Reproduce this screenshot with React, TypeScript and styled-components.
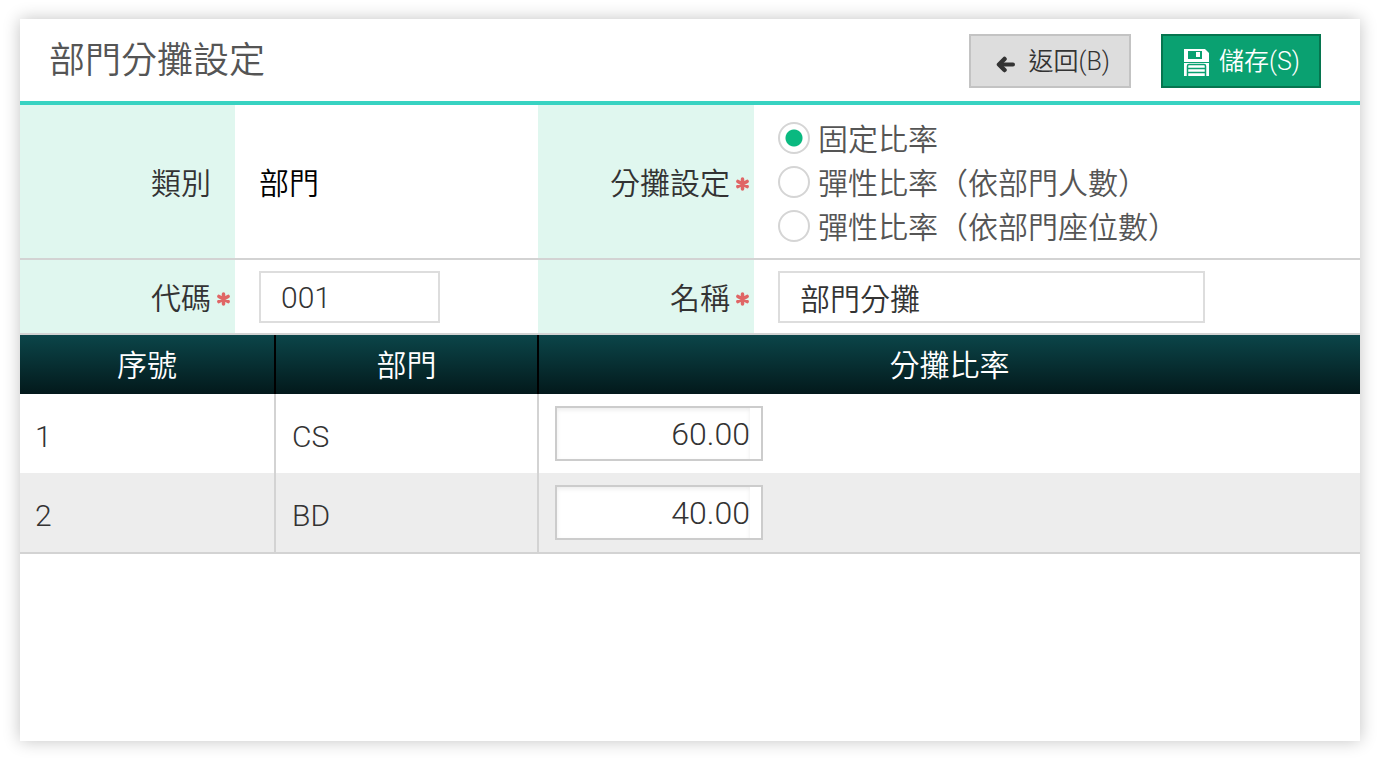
import React, { useState } from 'react';
import styled, { createGlobalStyle } from 'styled-components';

const GlobalStyle = createGlobalStyle`
  *, *::before, *::after { box-sizing: border-box; }
  body {
    margin: 0;
    background: #fff;
    color: #333;
    font-family: Roboto, 'Noto Sans CJK TC', sans-serif;
    font-weight: 350;
    font-size: 30px;
    line-height: 44px;
  }
  button, input { font: inherit; color: inherit; }
`;

const Page = styled.div`
  min-height: 100vh;
  padding: 19px 19px 19px 20px;
  display: flex;
`;

const Card = styled.main`
  flex: 1;
  min-width: 0;
  background: #fff;
  box-shadow: 0 0 16px rgba(0, 0, 0, 0.24);
`;

const Header = styled.header`
  display: flex;
  align-items: center;
  justify-content: space-between;
  height: 86px;
  padding: 2px 39px 0 29px;
  border-bottom: 4px solid #38d3c2;
`;

const Title = styled.h1`
  margin: 0;
  font-size: 36px;
  font-weight: inherit;
  line-height: 52px;
  color: #555;
`;

const Actions = styled.div`
  display: flex;
  gap: 30px;
`;

const ActionButton = styled.button<{ $primary?: boolean }>`
  display: flex;
  align-items: center;
  justify-content: flex-end;
  gap: ${(p) => (p.$primary ? 10 : 14)}px;
  width: ${(p) => (p.$primary ? 160 : 162)}px;
  height: 54px;
  padding: 2px 19px 0;
  border: 2px solid ${(p) => (p.$primary ? '#06754f' : '#c3c3c3')};
  border-radius: 0;
  background: ${(p) => (p.$primary ? '#0aa171' : '#ddd')};
  color: ${(p) => (p.$primary ? '#fff' : '#333')};
  font-size: 25px;
  line-height: 36px;
  white-space: nowrap;
  cursor: pointer;
`;

const FormGrid = styled.form`
  display: grid;
  grid-template-columns: 215px 303px 216px 1fr;
`;

const LabelCell = styled.div`
  display: flex;
  align-items: center;
  justify-content: flex-end;
  gap: 6px;
  padding: 4px 5px 0 0;
  background: #e0f7ef;
  border-bottom: 2px solid #d3d3d3;
`;

const StarSlot = styled.span`
  display: flex;
  width: 13px;
`;

const ValueCell = styled.div`
  display: flex;
  flex-direction: column;
  justify-content: center;
  padding: 11px 24px 10px;
  border-bottom: 2px solid #d3d3d3;
`;

const PlainValue = styled.span`
  padding-top: 4px;
  color: #000;
`;

const TextInput = styled.input<{ $width: number }>`
  width: 100%;
  max-width: ${(p) => p.$width}px;
  height: 52px;
  padding: 0 20px;
  border: 2px solid #ddd;
  border-radius: 0;
  background: #fff;
  outline: none;
`;

const RadioGroup = styled.div`
  display: flex;
  flex-direction: column;
  color: #555;
`;

const RadioLabel = styled.label`
  display: flex;
  align-items: center;
  gap: 8px;
  white-space: nowrap;
`;

const RadioText = styled.span`
  height: 44px;
  padding-top: 2px;
`;

const Radio = styled.input`
  appearance: none;
  flex: none;
  width: 32px;
  height: 32px;
  margin: 0;
  border: 2px solid #d5d5d5;
  border-radius: 50%;
  background: #fff;
  &:checked {
    background: radial-gradient(circle, #0ab980 8px, #fff 9px);
  }
`;

const Table = styled.table`
  width: 100%;
  table-layout: fixed;
  border-collapse: separate;
  border-spacing: 0;
  border-bottom: 2px solid #d3d3d3;
`;

const NumberCol = styled.col`
  width: 254px;
`;

const DeptCol = styled.col`
  width: 263px;
`;

const HeadRow = styled.tr`
  background: linear-gradient(#0b4549, #03191b);
  color: #fff;
`;

const HeadCell = styled.th`
  height: 59px;
  padding: 3px 0 0;
  font-weight: inherit;
  text-align: center;
  & + & { border-left: 2px solid #000; }
`;

const BodyRow = styled.tr`
  &:nth-child(even) { background: #ededed; }
`;

const BodyCell = styled.td`
  height: 79px;
  padding: 6px 16px 0 15px;
  & + & {
    padding-left: 16px;
    border-left: 2px solid #d3d3d3;
  }
`;

const RatioCell = styled(BodyCell)`
  padding: 0 16px;
`;

const RatioBox = styled.span`
  display: flex;
  width: 208px;
  height: 55px;
  padding-right: 11px;
  border: 2px solid #ccc;
  background: #fff;
`;

const RatioInput = styled.input`
  width: 100%;
  padding: 0;
  border: 0;
  background: #fff;
  box-shadow: inset 0 2px 4px rgba(0, 0, 0, 0.08);
  font-size: 32px;
  text-align: right;
  outline: none;
`;

const Star = () => (
  <svg width="13" height="14" viewBox="0 0 13 14" fill="none" stroke="#e06666" strokeWidth="3.500" strokeLinecap="round" aria-hidden="true">
    <path d="M6.5 2v10M1.900 4.400l9.200 5.200M11.100 4.400l-9.200 5.200" />
  </svg>
);

const BackIcon = () => (
  <svg width="19" height="22" viewBox="0 0 19 22" fill="none" stroke="currentColor" strokeLinecap="round" strokeLinejoin="round" aria-hidden="true">
    <path d="M8.500 8L3 13.500L8.500 19" strokeWidth="4.500" />
    <path d="M4 13.500H17" strokeWidth="4" />
  </svg>
);

const SaveIcon = () => (
  <svg width="26" height="27" viewBox="0 0 26 27" fill="none" aria-hidden="true">
    <path fill="currentColor" fillRule="evenodd" d="M1 0h21l4 4v9H1zM5 2v8h14V2zM13 3h4v5h-4z" />
    <path fill="currentColor" d="M1 14h25v13H1z" />
    <path stroke="#0aa171" strokeWidth="1.500" d="M4.500 27V17q0-1.500 1.500-1.500h15q1.500 0 1.500 1.500v10M4.500 19.500h18M4.500 23.500h18" />
  </svg>
);

const MODES = ['固定比率', '彈性比率（依部門人數）', '彈性比率（依部門座位數）'];

const ROWS = [
  { no: 1, dept: 'CS', ratio: '60.00' },
  { no: 2, dept: 'BD', ratio: '40.00' },
];

export default function App() {
  const [mode, setMode] = useState(0);

  return (
    <Page>
      <GlobalStyle />
      <Card>
        <Header>
          <Title>部門分攤設定</Title>
          <Actions>
            <ActionButton type="button" accessKey="b"><BackIcon />返回(B)</ActionButton>
            <ActionButton type="submit" form="allocation" accessKey="s" $primary><SaveIcon />儲存(S)</ActionButton>
          </Actions>
        </Header>

        <FormGrid id="allocation" onSubmit={(e) => e.preventDefault()}>
          <LabelCell><span>類別</span><StarSlot /></LabelCell>
          <ValueCell><PlainValue>部門</PlainValue></ValueCell>
          <LabelCell><span id="mode-label">分攤設定</span><StarSlot><Star /></StarSlot></LabelCell>
          <ValueCell>
            <RadioGroup role="radiogroup" aria-labelledby="mode-label">
              {MODES.map((text, i) => (
                <RadioLabel key={text}>
                  <Radio type="radio" name="mode" checked={mode === i} onChange={() => setMode(i)} />
                  <RadioText>{text}</RadioText>
                </RadioLabel>
              ))}
            </RadioGroup>
          </ValueCell>

          <LabelCell><label htmlFor="code">代碼</label><StarSlot><Star /></StarSlot></LabelCell>
          <ValueCell><TextInput id="code" $width={181} defaultValue="001" required /></ValueCell>
          <LabelCell><label htmlFor="name">名稱</label><StarSlot><Star /></StarSlot></LabelCell>
          <ValueCell><TextInput id="name" $width={427} defaultValue="部門分攤" required /></ValueCell>
        </FormGrid>

        <Table>
          <colgroup>
            <NumberCol />
            <DeptCol />
            <col />
          </colgroup>
          <thead>
            <HeadRow>
              <HeadCell scope="col">序號</HeadCell>
              <HeadCell scope="col">部門</HeadCell>
              <HeadCell scope="col">分攤比率</HeadCell>
            </HeadRow>
          </thead>
          <tbody>
            {ROWS.map((row) => (
              <BodyRow key={row.no}>
                <BodyCell>{row.no}</BodyCell>
                <BodyCell>{row.dept}</BodyCell>
                <RatioCell>
                  <RatioBox>
                    <RatioInput aria-label={`${row.dept} 分攤比率`} defaultValue={row.ratio} inputMode="decimal" />
                  </RatioBox>
                </RatioCell>
              </BodyRow>
            ))}
          </tbody>
        </Table>
      </Card>
    </Page>
  );
}
